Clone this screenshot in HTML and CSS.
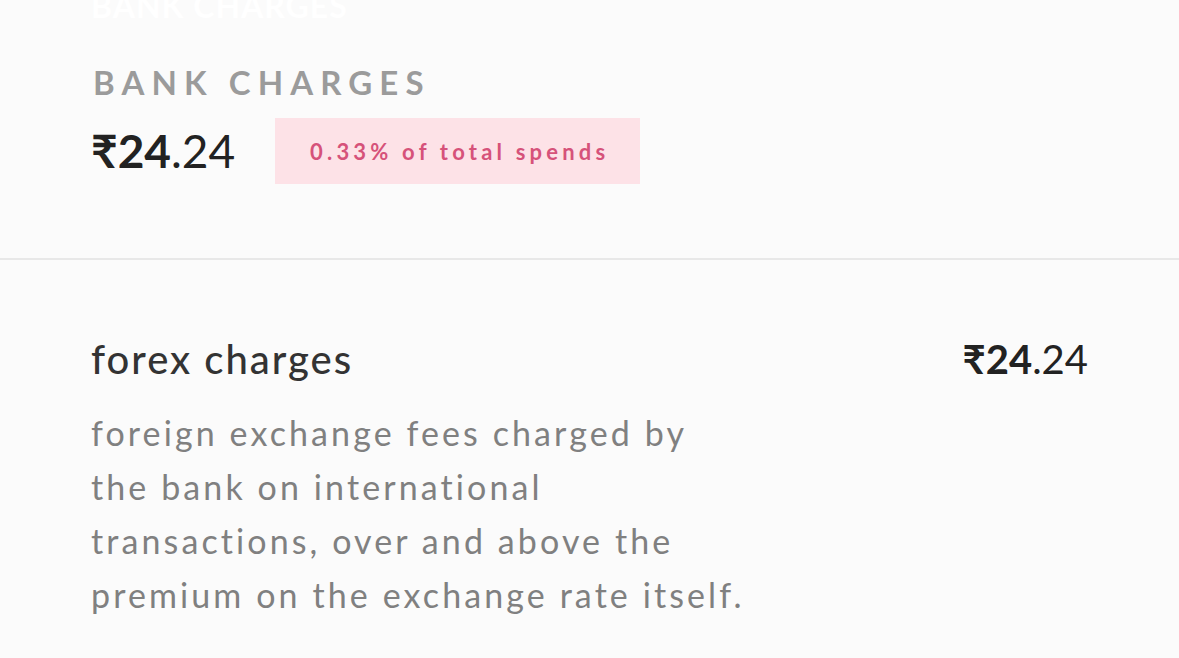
FILE: index.html
```html
<!DOCTYPE html>
<html>
<head>
<meta charset="utf-8">
<link rel="stylesheet" href="styles.css">
</head>
<body>
<div class="page">
  <div class="ghost">BANK CHARGES</div>
  <section class="summary">
    <div class="label">BANK CHARGES</div>
    <div class="row">
      <div class="amount"><span class="rs">₹</span><b>24</b>.24</div>
      <div class="badge">0.33% of total spends</div>
    </div>
  </section>
  <section class="item">
    <div class="item-head">
      <div class="title">forex charges</div>
      <div class="item-amount"><span class="rs">₹</span><b>24</b>.24</div>
    </div>
    <p class="desc">foreign exchange fees charged by the bank on international transactions, over and above the premium on the exchange rate itself.</p>
  </section>
</div>
</body>
</html>
```

FILE: styles.css
```css
html, body { margin: 0; padding: 0; }
body {
  background: #fbfbfb;
  font-family: "Lato", "Noto Sans", sans-serif;
  width: 1179px;
  height: 658px;
  overflow: hidden;
}
.page { position: relative; }
.ghost {
  position: absolute;
  left: 91px;
  top: -14px;
  font-size: 32px;
  font-weight: 700;
  letter-spacing: 1px;
  color: #ffffff;
}
.summary {
  padding: 62px 91px 0 93px;
  height: 260px;
  box-sizing: border-box;
  border-bottom: 2px solid #e8e8e8;
}
.label {
  font-size: 33px;
  font-weight: 700;
  letter-spacing: 7.1px;
  color: #9b9b9b;
  line-height: 40px;
}
.row {
  display: flex;
  align-items: center;
  margin-top: 16px;
  gap: 40px;
}
.amount {
  font-size: 46px;
  color: #222;
  margin-left: -2px;
  line-height: 66px;
}
.amount b, .item-amount b { font-weight: 700; }
.rs { font-weight: 700; }
.badge {
  background: #fde2e7;
  color: #d6527a;
  font-size: 22px;
  font-weight: 700;
  letter-spacing: 4.2px;
  height: 66px;
  width: 365px;
  box-sizing: border-box;
  display: flex;
  align-items: center;
  justify-content: center;
  padding-left: 4px;
}
.item {
  padding: 75px 91px 0 91px;
}
.item-head {
  display: flex;
  justify-content: space-between;
  align-items: center;
}
.title {
  font-size: 40px;
  font-weight: 500;
  letter-spacing: 2px;
  color: #333;
}
.item-amount {
  font-size: 40px;
  color: #222;
}
.desc {
  margin: 23px 0 0 0;
  width: 660px;
  font-size: 34px;
  letter-spacing: 3.1px;
  line-height: 54px;
  color: #808080;
}
```
